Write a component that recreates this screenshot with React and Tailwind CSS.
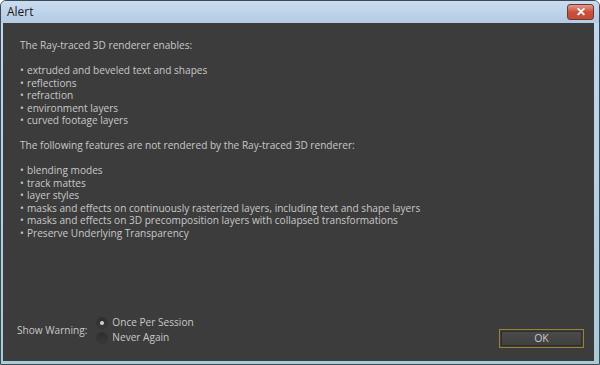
import React, { useState } from 'react';

const enables = [
  'extruded and beveled text and shapes',
  'reflections',
  'refraction',
  'environment layers',
  'curved footage layers',
];

const notRendered = [
  'blending modes',
  'track mattes',
  'layer styles',
  'masks and effects on continuously rasterized layers, including text and shape layers',
  'masks and effects on 3D precomposition layers with collapsed transformations',
  'Preserve Underlying Transparency',
];

const Bullets = ({ items }) => (
  <ul>
    {items.map((item) => (
      <li key={item} className="flex">
        <span className="w-[5px] mr-[2px]">•</span>
        <span>{item}</span>
      </li>
    ))}
  </ul>
);

const Radio = ({ checked, label, onClick }) => (
  <button onClick={onClick} className="flex items-center gap-[4px] h-[15px]">
    <span className="w-[12px] h-[12px] rounded-full bg-gradient-to-b from-[#2e2e2e] to-[#3a3a3a] border border-[#333] flex items-center justify-center">
      {checked && <span className="w-[4px] h-[4px] rounded-full bg-[#d0d0d0]" />}
    </span>
    <span>{label}</span>
  </button>
);

export default function App() {
  const [mode, setMode] = useState('once');

  return (
    <div
      className="w-[600px] h-[365px] bg-gradient-to-b from-[#c3d8ee] to-[#a8cbd6] border border-[#3b4855] rounded-t-[6px] flex flex-col overflow-hidden"
      style={{ fontFamily: '"Open Sans", "Liberation Sans", sans-serif' }}
    >
      <div className="h-[22px] flex items-center justify-between pl-[6px] pr-[5px] bg-gradient-to-b from-[#c9dcf0] to-[#b4cbe4]">
        <span className="text-[12px] text-[#1a1a1a]">Alert</span>
        <button className="w-[27px] h-[16px] mb-[1px] rounded-[3px] border border-[#6b3a33] bg-gradient-to-b from-[#e39a8a] via-[#c8503c] to-[#c24a36] flex items-center justify-center text-white text-[12px] font-bold leading-none">
          ✕
        </button>
      </div>
      <div className="flex-1 mx-[2px] mr-[5px] mb-[3px] bg-[#3c3c3c] text-[#c8c8c8] text-[10.1px] leading-[12.5px] flex flex-col">
        <div className="pl-[17px] pt-[16px] flex-1">
          <p>The Ray-traced 3D renderer enables:</p>
          <div className="h-[12.5px]" />
          <Bullets items={enables} />
          <div className="h-[12.5px]" />
          <p>The following features are not rendered by the Ray-traced 3D renderer:</p>
          <div className="h-[12.5px]" />
          <Bullets items={notRendered} />
        </div>
        <div className="flex items-end justify-between pl-[14px] pr-[10px] pb-[14px]">
          <div className="flex items-center gap-[9px] mb-[2px]">
            <span>Show Warning:</span>
            <div className="flex flex-col">
              <Radio checked={mode === 'once'} label="Once Per Session" onClick={() => setMode('once')} />
              <Radio checked={mode === 'never'} label="Never Again" onClick={() => setMode('never')} />
            </div>
          </div>
          <button className="w-[85px] h-[19px] border border-[#9a8330] p-[1px] mb-[-1px]">
            <span className="w-full h-full flex items-center justify-center border border-[#2e2e2e] bg-gradient-to-b from-[#4a4a4a] to-[#404040] text-[10.5px] text-[#c8c8c8]">
              OK
            </span>
          </button>
        </div>
      </div>
    </div>
  );
}
